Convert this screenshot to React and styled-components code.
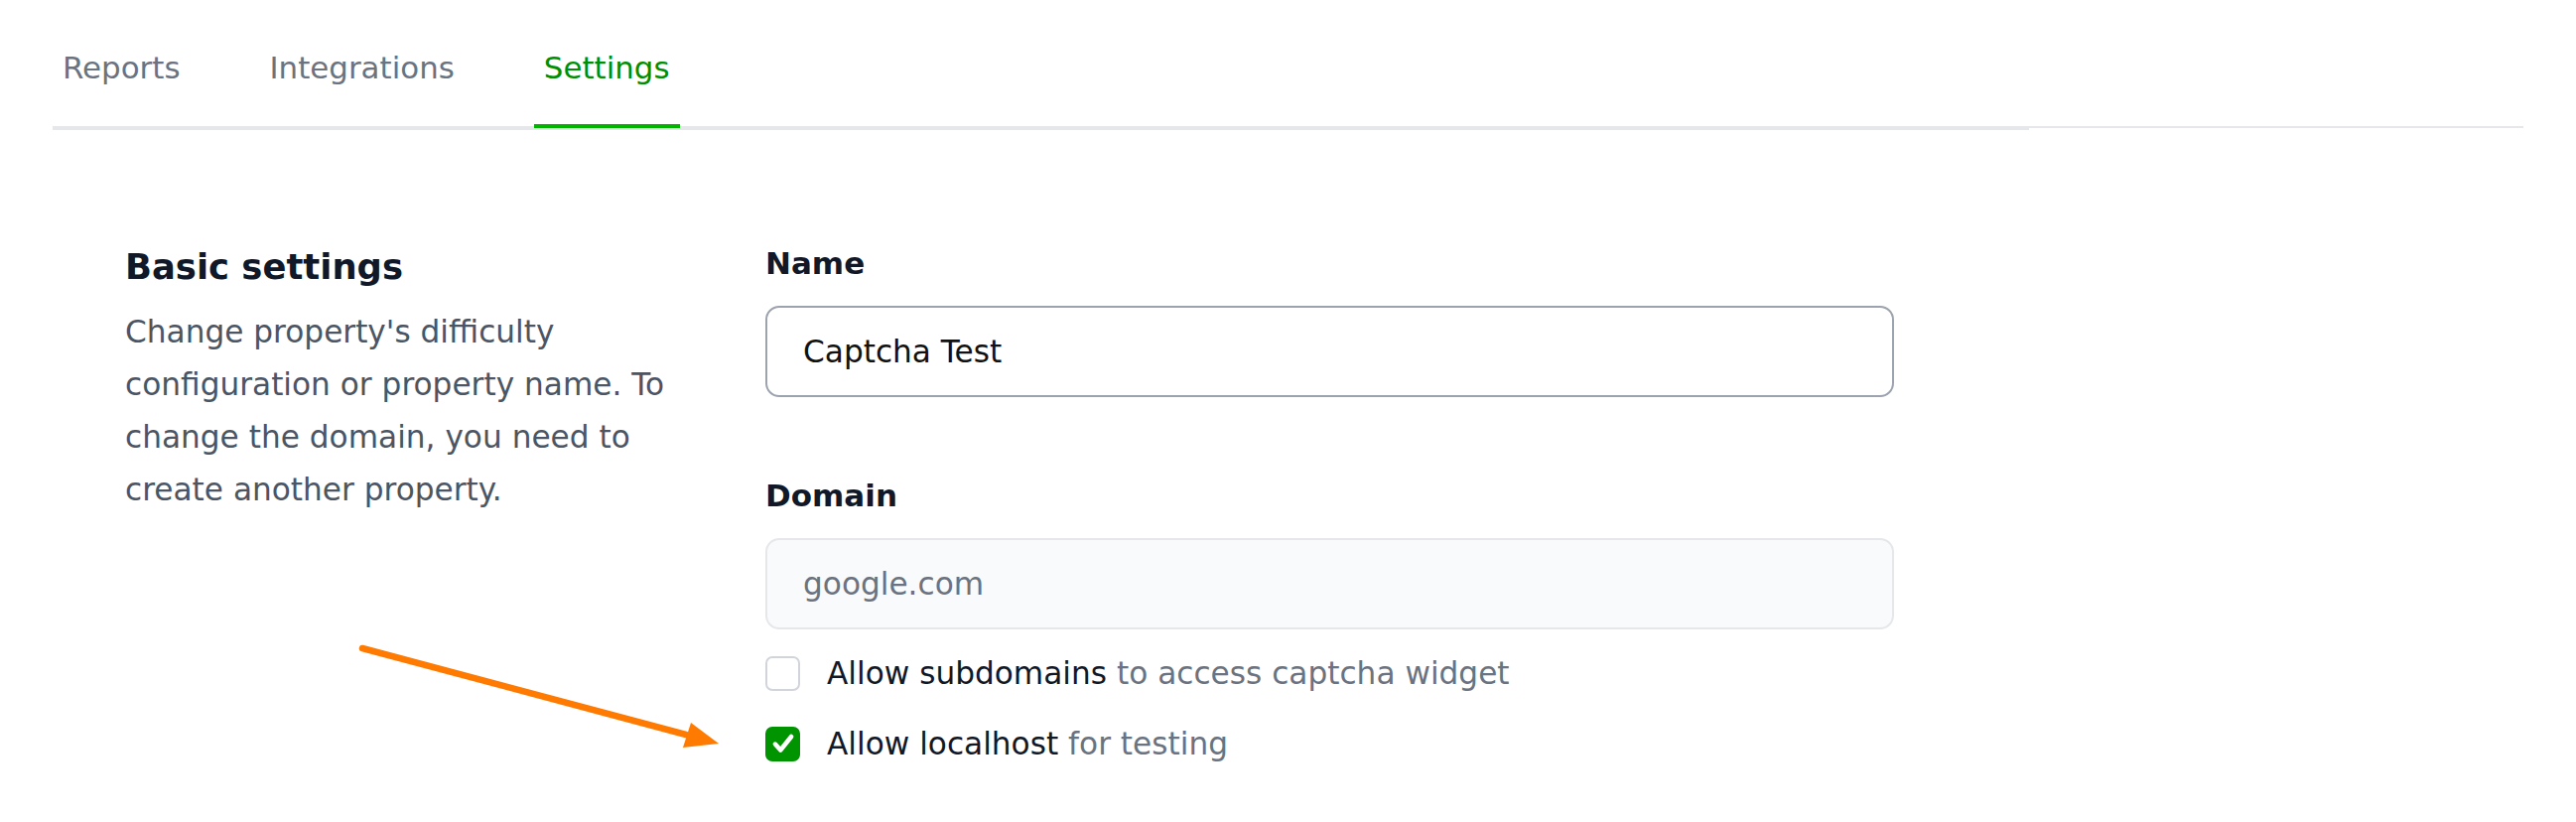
import React from "react";
import styled, { createGlobalStyle } from "styled-components";

const GlobalStyle = createGlobalStyle`
  html, body { margin: 0; padding: 0; background: #ffffff; }
  body { font-family: "DejaVu Sans", "Liberation Sans", sans-serif; }
  * { box-sizing: border-box; }
`;

const Page = styled.div`
  position: relative;
  width: 2595px;
  height: 828px;
  padding: 0 53px;
  font-family: "DejaVu Sans", "Liberation Sans", sans-serif;
  font-size: 31.2px;
`;

const Header = styled.div`
  display: flex;
  border-bottom: 2px solid #e5e7eb;
`;

const TabList = styled.nav`
  display: flex;
  gap: 70px;
  width: 1991px;
  border-bottom: 4px solid #e5e7eb;
  margin-bottom: -4px;
`;

const Tab = styled.a`
  display: block;
  padding: 50px 10px 39px;
  line-height: 36px;
  font-size: 30.9px;
  color: ${(p) => (p.$active ? "#008f00" : "#6b7280")};
  border-bottom: 4px solid ${(p) => (p.$active ? "#00b400" : "transparent")};
  margin-bottom: -2px;
  text-decoration: none;
  cursor: pointer;
`;

const Main = styled.main`
  display: grid;
  grid-template-columns: 645px 1137px;
  padding: 113px 0 0 73px;
`;

const Intro = styled.section`
  width: 580px;
`;

const Heading = styled.h2`
  margin: 0;
  font-size: 35.4px;
  line-height: 54px;
  font-weight: 700;
  color: #111827;
`;

const Description = styled.p`
  margin: 12px 0 0;
  font-size: 31.2px;
  line-height: 53px;
  color: #4b5563;
`;

const Form = styled.div`
  display: flex;
  flex-direction: column;
`;

const Field = styled.div`
  display: flex;
  flex-direction: column;
  margin-top: ${(p) => p.$mt || 0}px;
`;

const Label = styled.label`
  font-size: 31px;
  line-height: 46px;
  font-weight: 700;
  color: #111827;
  margin-bottom: 20px;
`;

const TextInput = styled.input`
  width: 1137px;
  height: 92px;
  padding: 0 36px;
  border-radius: 14px;
  border: 2px solid ${(p) => (p.$disabled ? "#e5e7eb" : "#9ca3af")};
  background: ${(p) => (p.$disabled ? "#f9fafb" : "#ffffff")};
  color: ${(p) => (p.$disabled ? "#6b7280" : "#111111")};
  font-family: "DejaVu Sans", "Liberation Sans", sans-serif;
  font-size: 31.2px;
  outline: none;
`;

const Options = styled.div`
  display: flex;
  flex-direction: column;
  gap: 25px;
  margin-top: 21px;
`;

const OptionRow = styled.label`
  display: flex;
  align-items: center;
  gap: 27px;
  line-height: 46px;
  font-size: 31.2px;
  color: #111827;
`;

const Box = styled.span`
  display: flex;
  align-items: center;
  justify-content: center;
  width: 35px;
  height: 35px;
  border-radius: 7px;
  border: 2px solid ${(p) => (p.$checked ? "#009400" : "#d1d5db")};
  background: ${(p) => (p.$checked ? "#009400" : "#ffffff")};
  flex-shrink: 0;
`;

const Muted = styled.span`
  color: #6b7280;
`;

const Arrow = styled.svg`
  position: absolute;
  left: 355px;
  top: 640px;
  overflow: visible;
  pointer-events: none;
`;

function Checkbox({ checked }) {
  return (
    <Box $checked={checked}>
      {checked && (
        <svg width="26" height="26" viewBox="0 0 24 24" fill="none">
          <path
            d="M4.5 12.5 L9.5 18 L19.5 5.5"
            stroke="#ffffff"
            strokeWidth="4.2"
            strokeLinecap="round"
            strokeLinejoin="round"
          />
        </svg>
      )}
    </Box>
  );
}

export default function App() {
  return (
    <>
      <GlobalStyle />
      <Page>
        <Header>
          <TabList>
            <Tab>Reports</Tab>
            <Tab>Integrations</Tab>
            <Tab $active>Settings</Tab>
          </TabList>
        </Header>
        <Main>
          <Intro>
            <Heading>Basic settings</Heading>
            <Description>
              Change property's difficulty configuration or property name. To
              change the domain, you need to create another property.
            </Description>
          </Intro>
          <Form>
            <Field>
              <Label>Name</Label>
              <TextInput value="Captcha Test" readOnly />
            </Field>
            <Field $mt={76}>
              <Label>Domain</Label>
              <TextInput value="google.com" readOnly $disabled />
            </Field>
            <Options>
              <OptionRow>
                <Checkbox />
                <span>
                  Allow subdomains <Muted>to access captcha widget</Muted>
                </span>
              </OptionRow>
              <OptionRow>
                <Checkbox checked />
                <span>
                  Allow localhost <Muted>for testing</Muted>
                </span>
              </OptionRow>
            </Options>
          </Form>
        </Main>
        <Arrow width="380" height="125" viewBox="0 0 380 125">
          <line
            x1="10"
            y1="13"
            x2="336"
            y2="100"
            stroke="#ff7a00"
            strokeWidth="6.5"
            strokeLinecap="round"
          />
          <polygon points="369,109 333,113 341,88" fill="#ff7a00" />
        </Arrow>
      </Page>
    </>
  );
}
